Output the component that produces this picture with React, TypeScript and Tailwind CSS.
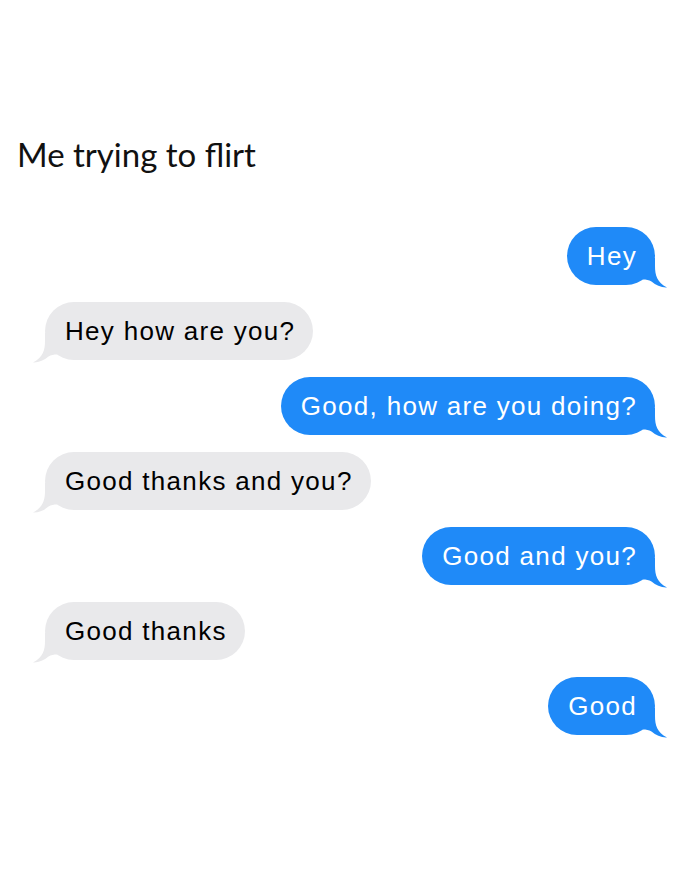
import React from "react";

type Msg = { text: string; me: boolean };

const messages: Msg[] = [
  { text: "Hey", me: true },
  { text: "Hey how are you?", me: false },
  { text: "Good, how are you doing?", me: true },
  { text: "Good thanks and you?", me: false },
  { text: "Good and you?", me: true },
  { text: "Good thanks", me: false },
  { text: "Good", me: true },
];

function Tail({ me }: { me: boolean }) {
  return (
    <svg
      width="25"
      height="30"
      viewBox="0 0 25 30"
      className={
        me
          ? "absolute bottom-[-3px] right-[-13px] fill-[#1f8af8]"
          : "absolute bottom-[-3px] left-[-13px] scale-x-[-1] fill-[#e9e9eb]"
      }
    >
      <path d="M0 0 L12 0 L12 8 C12 17 14 24.5 24 29.5 C18.5 29.8 13 27.6 8.5 23.6 C6 22.2 3 21.6 0 21.6 Z" />
    </svg>
  );
}

function Bubble({ msg }: { msg: Msg }) {
  const { text, me } = msg;
  return (
    <div className={me ? "flex justify-end" : "flex justify-start"}>
      <div
        className={
          me
            ? "relative flex h-[58px] items-center rounded-[29px] bg-[#1f8af8] pl-[20px] pr-[18px] text-white"
            : "relative flex h-[58px] items-center rounded-[29px] bg-[#e9e9eb] pl-[20px] pr-[18px] text-black"
        }
      >
        <Tail me={me} />
        <span className="relative text-[26px] tracking-[1.3px] [font-family:'Liberation_Sans',Arial,sans-serif]">
          {text}
        </span>
      </div>
    </div>
  );
}

export default function App() {
  return (
    <div className="h-[875px] w-[700px] bg-white">
      <h1 className="pl-[17px] pt-[134px] text-[33px] leading-[40px] text-[#111] [font-family:Lato,sans-serif]">
        Me trying to flirt
      </h1>
      <div className="mt-[53px] flex flex-col gap-[17px] px-[45px]">
        {messages.map((m, i) => (
          <Bubble key={i} msg={m} />
        ))}
      </div>
    </div>
  );
}
